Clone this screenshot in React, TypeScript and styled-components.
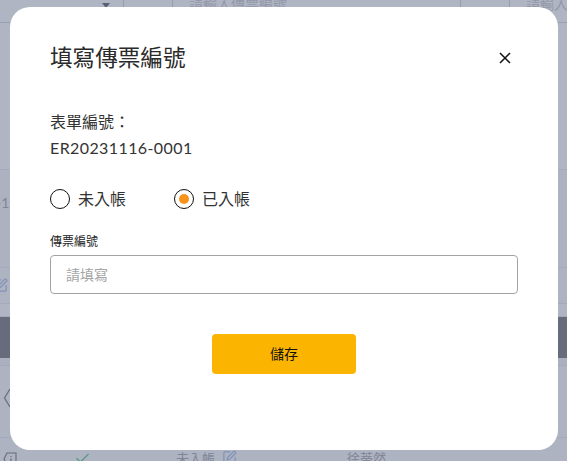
import { createGlobalStyle, styled } from 'styled-components'
import { Check, SquarePen } from 'lucide-react'

const Global = createGlobalStyle`
html, body {
  margin: 0;
  padding: 0;
  height: 100%;
  overflow: hidden;
}
body {
  font-family: "Lato", "Noto Sans CJK TC", sans-serif;
}
* {
  box-sizing: border-box;
}
`

const App = () => {
  return (
    <Page>
      <Global />
      <FilterRow>
        <ArrowCell>
          <Arrow />
        </ArrowCell>
        <FilterCell $width={49} />
        <FilterCell $width={288}>請輸入傳票編號</FilterCell>
        <FilterCell $width={49} />
        <FilterCell $width={58}>請輸入傳票編號</FilterCell>
      </FilterRow>
      <Band $height={147} $bg="#b0b5c3" />
      <Band $height={98} $bg="#adb2c0">
        <EdgeText>-1</EdgeText>
      </Band>
      <Band $height={36} $bg="#aeb3c1">
        <EdgeIcon>
          <SquarePen size={15} color="#7f92b8" />
        </EdgeIcon>
      </Band>
      <Band $height={13} $bg="#b0b5c3" />
      <DarkBand />
      <Band $height={8} $bg="#abb0bf" />
      <Band $height={72} $bg="#aeb3c1">
        <Chevron>
          <svg width="8" height="20" viewBox="0 0 8 20">
            <path d="M7 1L1.5 10L7 19" fill="none" stroke="#666c7b" strokeWidth="1.2" />
          </svg>
        </Chevron>
      </Band>
      <BottomRow>
        <InfoIcon>
          <svg width="14" height="14" viewBox="0 0 14 14">
            <path d="M4 1H13V13H4L1 7Z" fill="none" stroke="#666c7b" strokeWidth="1.1" />
            <path d="M8 4V5M8 6.5V11" stroke="#666c7b" strokeWidth="1.2" />
          </svg>
        </InfoIcon>
        <CheckCell>
          <Check size={17} color="#5f9a86" />
        </CheckCell>
        <StatusCell>
          未入帳
          <SquarePen size={15} color="#7f92b8" />
        </StatusCell>
        <NameCell>徐蒂然</NameCell>
      </BottomRow>

      <Overlay>
        <Modal>
          <Header>
            <Title>填寫傳票編號</Title>
            <CloseButton aria-label="close">
              <svg width="12" height="12" viewBox="0 0 12 12">
                <path d="M1 1L11 11M11 1L1 11" stroke="#111" strokeWidth="1.5" />
              </svg>
            </CloseButton>
          </Header>
          <Info>
            <InfoLine>表單編號：</InfoLine>
            <InfoNumber>ER20231116-0001</InfoNumber>
          </Info>
          <RadioRow>
            <RadioItem>
              <RadioMark />
              未入帳
            </RadioItem>
            <RadioItem>
              <RadioMark $checked />
              已入帳
            </RadioItem>
          </RadioRow>
          <FieldLabel>傳票編號</FieldLabel>
          <Input placeholder="請填寫" />
          <Footer>
            <SaveButton>儲存</SaveButton>
          </Footer>
        </Modal>
      </Overlay>
    </Page>
  )
}

export default App

const Page = styled.div`
position: relative;
width: 567px;
height: 461px;
overflow: hidden;
background-color: #aeb3c1;
display: flex;
flex-direction: column;
`
const FilterRow = styled.div`
height: 23px;
flex-shrink: 0;
display: flex;
background-color: #b0b5c3;
border-bottom: 1px solid #9a9faf;
`
const ArrowCell = styled.div`
width: 123px;
flex-shrink: 0;
display: flex;
justify-content: flex-end;
padding: 3px 13px 0 0;
`
const Arrow = styled.div`
width: 0;
height: 0;
border-left: 4px solid transparent;
border-right: 4px solid transparent;
border-top: 5px solid #596073;
`
const FilterCell = styled.div<{ $width: number }>`
width: ${(p) => p.$width}px;
flex-shrink: 0;
height: 22px;
padding-left: 16px;
border-left: 1px solid #979cad;
font-size: 14px;
line-height: 8px;
color: #9398a8;
white-space: nowrap;
overflow: hidden;
`
const Band = styled.div<{ $height: number; $bg: string }>`
height: ${(p) => p.$height}px;
flex-shrink: 0;
background-color: ${(p) => p.$bg};
border-bottom: 1px solid #a5aaba;
display: flex;
align-items: center;
`
const EdgeText = styled.div`
margin: -32px 0 0 -4px;
font-size: 14px;
color: #7f8596;
`
const EdgeIcon = styled.div`
margin: 0 0 0 -7px;
display: flex;
`
const Chevron = styled.div`
margin: -8px 0 0 3px;
display: flex;
`
const DarkBand = styled.div`
height: 41px;
flex-shrink: 0;
background-color: #666c7b;
`
const BottomRow = styled.div`
flex: 1;
display: flex;
align-items: flex-start;
padding-top: 14px;
font-size: 13px;
color: #7f8596;
`
const InfoIcon = styled.div`
width: 74px;
padding-left: 3px;
flex-shrink: 0;
display: flex;
`
const CheckCell = styled.div`
width: 102px;
flex-shrink: 0;
margin-top: -2px;
display: flex;
`
const StatusCell = styled.div`
width: 171px;
flex-shrink: 0;
display: flex;
align-items: center;
gap: 7px;
margin-top: -4px;
`
const NameCell = styled.div`
margin-top: -4px;
`
const Overlay = styled.div`
position: absolute;
inset: 0;
`
const Modal = styled.div`
position: absolute;
left: 10px;
top: 7px;
width: 548px;
height: 443px;
padding: 28px 40px 0;
background-color: #fff;
border-radius: 20px;
display: flex;
flex-direction: column;
`
const Header = styled.div`
display: flex;
justify-content: space-between;
align-items: center;
height: 46px;
`
const Title = styled.div`
font-size: 22.6px;
color: #2a2a2a;
margin-top: -4px;
`
const CloseButton = styled.button`
width: 12px;
height: 12px;
margin-right: 7px;
padding: 0;
border: none;
background: none;
display: flex;
`
const Info = styled.div`
margin-top: 29px;
display: flex;
flex-direction: column;
gap: 2px;
`
const InfoLine = styled.div`
font-size: 16px;
line-height: 24px;
color: #333;
`
const InfoNumber = styled(InfoLine)`
letter-spacing: 0.4px;
`
const RadioRow = styled.div`
margin-top: 27px;
display: flex;
gap: 48px;
`
const RadioItem = styled.label`
display: flex;
align-items: center;
gap: 8px;
font-size: 16px;
line-height: 24px;
color: #333;
`
const RadioMark = styled.span<{ $checked?: boolean }>`
width: 20px;
height: 20px;
border-radius: 50%;
border: 1.5px solid #111;
display: flex;
align-items: center;
justify-content: center;
&::after {
  content: "";
  width: 10px;
  height: 10px;
  border-radius: 50%;
  background-color: ${(p) => (p.$checked ? '#f7931a' : 'transparent')};
}
`
const FieldLabel = styled.div`
margin-top: 22px;
font-size: 12px;
line-height: 18px;
color: #222;
`
const Input = styled.input`
margin-top: 4px;
width: 100%;
height: 39px;
padding: 0 15px;
border: 1px solid #a3a3a3;
border-radius: 4px;
font-family: inherit;
font-size: 14px;
outline: none;
&::placeholder {
  color: #a5a5a5;
}
`
const Footer = styled.div`
margin-top: 40px;
display: flex;
justify-content: center;
`
const SaveButton = styled.button`
width: 144px;
height: 40px;
padding: 0 0 2px;
border: none;
border-radius: 4px;
background-color: #fbb400;
font-family: inherit;
font-size: 14px;
color: #111;
`
